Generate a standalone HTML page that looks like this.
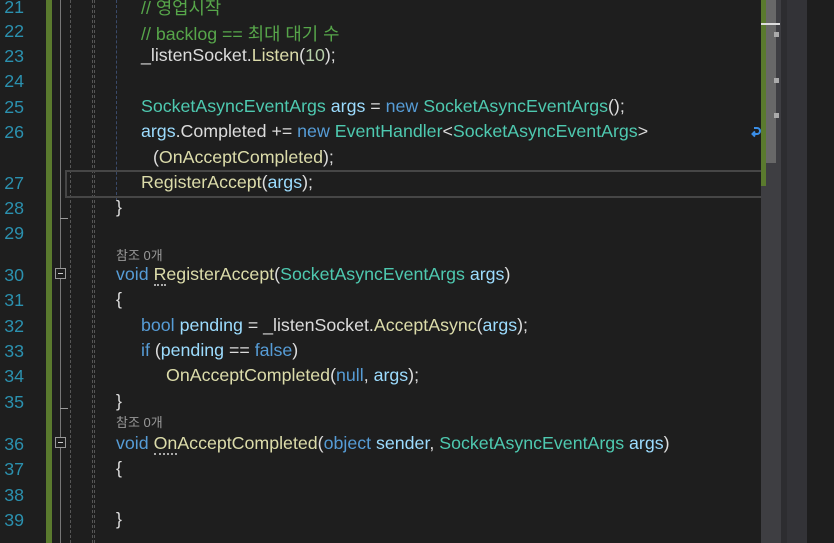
<!DOCTYPE html>
<html><head><meta charset="utf-8"><style>
html,body{margin:0;padding:0;width:834px;height:543px;overflow:hidden;background:#1e1e1e;}
body{position:relative;font-family:"Liberation Sans","Noto Sans CJK KR",sans-serif;font-size:17.8px;}
.ln{position:absolute;left:0;width:24px;text-align:right;color:#2b91af;font-size:17.8px;}
.c{position:absolute;white-space:pre;color:#dcdcdc;}
.k{color:#569cd6}.t{color:#4ec9b0}.m{color:#dcdcaa}.v{color:#9cdcfe}.g{color:#57a64a}.n{color:#b5cea8}
.ref{position:absolute;left:116px;font-size:13px;color:#999;}
.vl{position:absolute;top:0;height:543px;border-left:1px dashed #555;}
.u{border-bottom:2px dotted #aaa;}
</style></head><body>
<div style="position:absolute;left:46px;top:0;width:6px;height:543px;background:#5a7a2e"></div>
<div style="position:absolute;left:60px;top:0;width:1px;height:543px;background:#777"></div>
<div style="position:absolute;left:60px;top:218px;width:8px;height:1px;background:#999"></div>
<div style="position:absolute;left:60px;top:408px;width:8px;height:1px;background:#999"></div>
<div class="vl" style="left:70px"></div>
<div class="vl" style="left:92px"></div>
<div class="vl" style="left:94px"></div>
<div class="vl" style="left:116px;border-color:#3a4a6a;height:200px"></div>
<div style="position:absolute;left:55px;top:268px;width:9px;height:9px;border:1px solid #999;background:#1e1e1e"><div style="position:absolute;left:2px;top:4px;width:5px;height:1px;background:#ccc"></div></div>
<div style="position:absolute;left:55px;top:437px;width:9px;height:9px;border:1px solid #999;background:#1e1e1e"><div style="position:absolute;left:2px;top:4px;width:5px;height:1px;background:#ccc"></div></div>
<div style="position:absolute;left:65px;top:170px;width:694px;height:24px;border:2px solid #464646"></div>
<div class="ln" style="top:-3px">21</div><div class="c g" style="left:141px;top:-6px">// 영업시작</div>
<div class="ln" style="top:21px">22</div><div class="c g" style="left:141px;top:20px">// backlog == 최대 대기 수</div>
<div class="ln" style="top:46px">23</div><div class="c" style="left:141px;top:45px">_listenSocket.<span class="m">Listen</span>(<span class="n">10</span>);</div>
<div class="ln" style="top:71px">24</div>
<div class="ln" style="top:97px">25</div><div class="c" style="left:141px;top:96px"><span class="t">SocketAsyncEventArgs</span> <span class="v">args</span> = <span class="k">new</span> <span class="t">SocketAsyncEventArgs</span>();</div>
<div class="ln" style="top:122px">26</div><div class="c" style="left:141px;top:121px"><span class="v">args</span>.Completed += <span class="k">new</span> <span class="t">EventHandler</span>&lt;<span class="t">SocketAsyncEventArgs</span>&gt;</div>
<div class="c" style="left:153px;top:147px">(<span class="m">OnAcceptCompleted</span>);</div>
<svg style="position:absolute;left:751px;top:126px" width="10" height="14" viewBox="0 0 10 14"><path d="M3 2 H6 A3 3 0 0 1 6 8 H2 M4 5.5 L1.5 8 L4 10.5" stroke="#3a8ee6" stroke-width="2" fill="none"/></svg>
<div class="ln" style="top:173px">27</div><div class="c" style="left:141px;top:172px"><span class="m">RegisterAccept</span>(<span class="v">args</span>);</div>
<div class="ln" style="top:198px">28</div><div class="c" style="left:116px;top:197px">}</div>
<div class="ln" style="top:223px">29</div>
<div class="ref" style="top:245px">참조 0개</div>
<div class="ln" style="top:265px">30</div><div class="c" style="left:116px;top:264px"><span class="k">void</span> <span class="m u">R</span><span class="m">egisterAccept</span>(<span class="t">SocketAsyncEventArgs</span> <span class="v">args</span>)</div>
<div class="ln" style="top:290px">31</div><div class="c" style="left:116px;top:289px">{</div>
<div class="ln" style="top:316px">32</div><div class="c" style="left:141px;top:315px"><span class="k">bool</span> <span class="v">pending</span> = _listenSocket.<span class="m">AcceptAsync</span>(<span class="v">args</span>);</div>
<div class="ln" style="top:341px">33</div><div class="c" style="left:141px;top:340px"><span class="k">if</span> (<span class="v">pending</span> == <span class="k">false</span>)</div>
<div class="ln" style="top:366px">34</div><div class="c" style="left:166px;top:365px"><span class="m">OnAcceptCompleted</span>(<span class="k">null</span>, <span class="v">args</span>);</div>
<div class="ln" style="top:392px">35</div><div class="c" style="left:116px;top:391px">}</div>
<div class="ref" style="top:412px">참조 0개</div>
<div class="ln" style="top:434px">36</div><div class="c" style="left:116px;top:433px"><span class="k">void</span> <span class="m u">On</span><span class="m">AcceptCompleted</span>(<span class="k">object</span> <span class="v">sender</span>, <span class="t">SocketAsyncEventArgs</span> <span class="v">args</span>)</div>
<div class="ln" style="top:459px">37</div><div class="c" style="left:116px;top:458px">{</div>
<div class="ln" style="top:485px">38</div>
<div class="ln" style="top:510px">39</div><div class="c" style="left:116px;top:509px">}</div>
<div style="position:absolute;left:761px;top:0;width:20px;height:543px;background:#3e3e42"></div>
<div style="position:absolute;left:761px;top:0;width:5px;height:186px;background:#5a7a2e"></div>
<div style="position:absolute;left:766px;top:0;width:10px;height:163px;background:#686868"></div>
<div style="position:absolute;left:761px;top:23px;width:19px;height:2px;background:#ddd"></div>
<div style="position:absolute;left:774px;top:32px;width:5px;height:5px;background:#aaa"></div>
<div style="position:absolute;left:774px;top:78px;width:5px;height:5px;background:#aaa"></div>
<div style="position:absolute;left:774px;top:113px;width:5px;height:5px;background:#aaa"></div>
<div style="position:absolute;left:781px;top:0;width:6px;height:543px;background:#2d2d30"></div>
<div style="position:absolute;left:787px;top:0;width:20px;height:543px;background:#333337"></div>
</body></html>
